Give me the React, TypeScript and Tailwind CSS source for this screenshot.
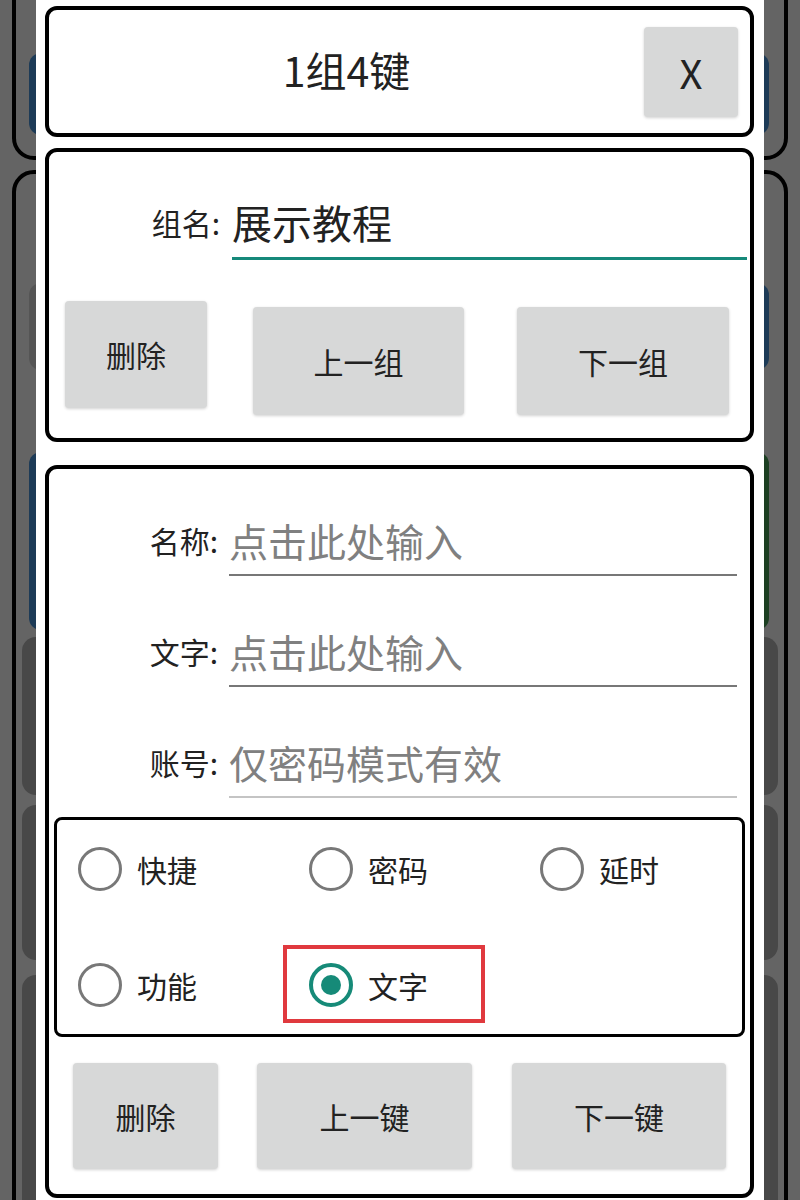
import React from "react";

const FONT = "font-['Noto_Sans_CJK_SC','Noto_Sans',sans-serif]";

function GrayButton({ label, className }: { label: string; className: string }) {
  return (
    <div
      className={`flex items-center justify-center rounded-[4px] bg-[#d7d8d8] text-[30px] text-[#222] shadow-[0_1px_3px_rgba(0,0,0,0.18)] ${className}`}
    >
      {label}
    </div>
  );
}

function FieldRow({
  label,
  placeholder,
  line,
  className,
}: {
  label: string;
  placeholder: string;
  line: string;
  className: string;
}) {
  return (
    <div className={`flex items-start ${className}`}>
      <div className="w-[169px] text-right text-[30px] leading-[48px] text-[#222]">{label}</div>
      <div className={`ml-[11px] mr-[13px] h-[60px] flex-1 border-b-2 ${line}`}>
        <div className="text-[39px] leading-[48px] text-[#808080]">{placeholder}</div>
      </div>
    </div>
  );
}

function Radio({ label, checked }: { label: string; checked?: boolean }) {
  return (
    <div className="relative flex items-center">
      {checked ? (
        <div className="flex h-[44px] w-[44px] items-center justify-center rounded-full border-4 border-[#168a78]">
          <div className="h-[20px] w-[20px] rounded-full bg-[#168a78]" />
        </div>
      ) : (
        <div className="h-[44px] w-[44px] rounded-full border-[3px] border-[#787878]" />
      )}
      <span className="ml-[15px] text-[30px] leading-[44px] text-[#222]">{label}</span>
      {checked && (
        <div className="absolute -left-[26px] -top-[18px] h-[78px] w-[202px] border-4 border-[#e0393e]" />
      )}
    </div>
  );
}

export default function App() {
  return (
    <div className={`relative h-[1200px] w-[800px] overflow-hidden bg-[#646464] ${FONT}`}>
      {/* list behind the dialog, dimmed */}
      <div className="flex flex-col px-[12px]">
        <div className="-mt-[20px] h-[180px] rounded-b-[22px] border-4 border-black pt-[69px]">
          <div className="ml-[13px] mr-[15px] h-[82px] rounded-[12px] bg-[#1d3b57]" />
        </div>
        <div className="mt-[10px] h-[1100px] rounded-t-[22px] border-4 border-black">
          <div className="mt-[109px] flex h-[87px] gap-4 pl-[13px] pr-[15px]">
            <div className="flex-1 rounded-[12px] bg-[#555]" />
            <div className="flex-1 rounded-[12px] bg-[#1d3b57]" />
          </div>
          <div className="mt-[82px] flex h-[178px] gap-4 pl-[13px] pr-[15px]">
            <div className="flex-1 rounded-[12px] bg-[#1d3b57]" />
            <div className="flex-1 rounded-[12px] bg-[#1c3f22]" />
          </div>
          <div className="mx-[6px] mt-[7px] h-[158px] rounded-[14px] bg-[#484848]" />
          <div className="mx-[6px] mt-[10px] h-[155px] rounded-[14px] bg-[#484848]" />
          <div className="mx-[6px] mt-[15px] h-[240px] rounded-[14px] bg-[#484848]" />
        </div>
      </div>

      {/* dialog */}
      <div className="absolute left-[36px] top-0 flex h-[1200px] w-[728px] flex-col bg-white pl-[9px] pr-[10px] pt-[6px]">
        {/* header */}
        <div className="flex h-[131px] items-center rounded-[12px] border-4 border-black">
          <div className="flex-1 pb-[4px] text-center text-[41px] text-[#222]">1组4键</div>
          <div className="mr-[12px] flex h-[90px] w-[94px] items-center justify-center rounded-[4px] bg-[#d7d8d8] text-[40px] text-[#222] shadow-[0_1px_3px_rgba(0,0,0,0.18)]">
            X
          </div>
        </div>

        {/* group */}
        <div className="mt-[11px] h-[294px] rounded-[12px] border-4 border-black">
          <div className="mt-[46px] flex items-start">
            <div className="w-[171px] text-right text-[30px] leading-[48px] text-[#222]">组名:</div>
            <div className="ml-[12px] mr-[3px] h-[62px] flex-1 border-b-[3px] border-[#16897a]">
              <div className="text-[40px] leading-[48px] text-[#222]">展示教程</div>
            </div>
          </div>
          <div className="mt-[41px] flex items-start">
            <GrayButton label="删除" className="ml-[16px] h-[107px] w-[142px]" />
            <GrayButton label="上一组" className="ml-[46px] mt-[6px] h-[108px] w-[211px]" />
            <GrayButton label="下一组" className="ml-[53px] mt-[6px] h-[108px] w-[212px]" />
          </div>
        </div>

        {/* key */}
        <div className="mt-[23px] h-[733px] rounded-[12px] border-4 border-black">
          <FieldRow label="名称:" placeholder="点击此处输入" line="border-[#777]" className="mt-[47px]" />
          <FieldRow label="文字:" placeholder="点击此处输入" line="border-[#777]" className="mt-[51px]" />
          <FieldRow label="账号:" placeholder="仅密码模式有效" line="border-[#c4c4c4]" className="mt-[51px]" />

          <div className="mx-[5px] mt-[19px] h-[220px] rounded-[8px] border-[3px] border-black pl-[21px] pt-[27px]">
            <div className="grid grid-cols-[231px_231px_1fr] gap-y-[72px]">
              <Radio label="快捷" />
              <Radio label="密码" />
              <Radio label="延时" />
              <Radio label="功能" />
              <Radio label="文字" checked />
            </div>
          </div>

          <div className="mt-[26px] flex items-start">
            <GrayButton label="删除" className="ml-[24px] h-[106px] w-[145px]" />
            <GrayButton label="上一键" className="ml-[39px] h-[106px] w-[215px]" />
            <GrayButton label="下一键" className="ml-[40px] h-[106px] w-[214px]" />
          </div>
        </div>
      </div>
    </div>
  );
}
